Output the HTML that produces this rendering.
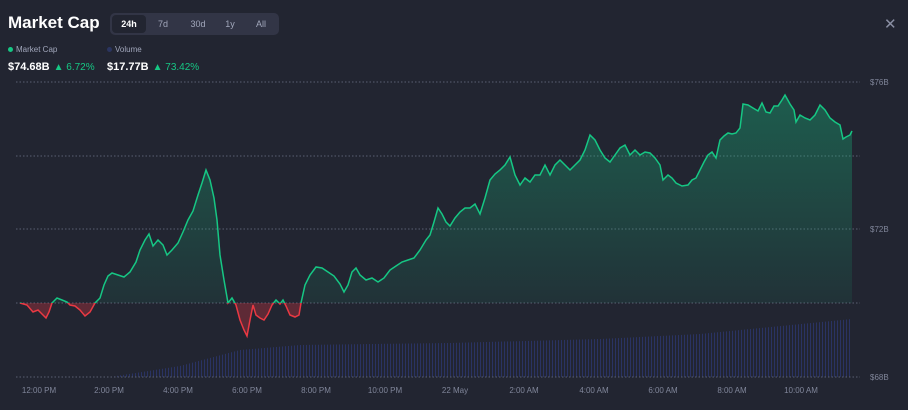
<!DOCTYPE html>
<html><head><meta charset="utf-8"><style>
body{margin:0;width:908px;height:410px;background:#222531;font-family:"Liberation Sans",sans-serif;overflow:hidden;position:relative;color:#fff}
.t{position:absolute;left:8px;top:13px;font-size:17px;font-weight:bold}
.tabs{position:absolute;left:110px;top:13px;width:169px;height:22px;background:#323546;border-radius:5px}
.tabs span{position:absolute;top:0;line-height:22px;font-size:9px;color:#a1a7bb;text-align:center}
.tabs .a{background:#222531;border-radius:4px;color:#fff;font-weight:bold;left:2px;top:2px;width:34px;line-height:18px}
.lg{position:absolute;top:45px;font-size:8px;color:#a1a7bb}
.dot{display:inline-block;width:5px;height:5px;border-radius:50%;margin-right:3px;vertical-align:0}
.v{position:absolute;top:61px;font-size:11px;font-weight:bold}
.v b{color:#16c784;font-weight:normal;font-size:10px;margin-left:4px}
.x{position:absolute;left:884px;top:15px;color:#8a8fa3;font-size:15px}
</style></head><body>
<div class="t">Market Cap</div>
<div class="tabs"><span class="a">24h</span><span style="left:43px;width:20px">7d</span><span style="left:76px;width:24px">30d</span><span style="left:113px;width:14px">1y</span><span style="left:143px;width:16px">All</span></div>
<div class="lg" style="left:8px"><span class="dot" style="background:#16c784"></span>Market Cap</div>
<div class="lg" style="left:107px"><span class="dot" style="background:#2b3560"></span>Volume</div>
<div class="v" style="left:8px">$74.68B<b>▲ 6.72%</b></div>
<div class="v" style="left:107px">$17.77B<b>▲ 73.42%</b></div>
<div class="x">✕</div>
<svg width="908" height="410" style="position:absolute;left:0;top:0">
<defs>
<linearGradient id="g" x1="0" y1="90" x2="0" y2="303" gradientUnits="userSpaceOnUse"><stop offset="0" stop-color="#16c784" stop-opacity=".35"/><stop offset="1" stop-color="#16c784" stop-opacity=".08"/></linearGradient>
<pattern id="st" width="3" height="10" patternUnits="userSpaceOnUse"><rect width="1" height="10" fill="#2a3363"/></pattern>
<clipPath id="up"><rect x="0" y="0" width="908" height="303"/></clipPath>
<clipPath id="dn"><rect x="0" y="303" width="908" height="100"/></clipPath>
<path id="ln" d="M20,303 L27,305 33,312 38,310 42,314 46,318 49,312 52,303 57,298 62,300 67,302 70,305 75,306 80,310 85,316 90,312 95,303 100,298 104,285 108,276 112,273 118,275 124,277 130,272 136,262 140,250 145,240 149,234 153,246 158,240 163,245 167,255 172,250 178,243 183,232 188,220 193,211 198,195 202,183 206,170 210,180 214,198 217,220 220,255 224,280 228,303 232,298 236,305 240,320 244,330 247,336 250,320 253,305 256,315 260,318 264,320 268,314 272,305 276,300 280,304 283,300 286,306 290,315 295,317 299,315 301,303 305,285 310,275 316,267 322,268 328,272 334,276 340,284 344,292 348,285 352,272 356,268 360,275 366,280 372,278 378,282 384,278 390,270 396,266 402,262 408,260 414,258 420,250 426,240 430,235 434,222 438,208 442,214 446,222 450,226 455,218 460,212 465,208 470,208 475,204 480,214 485,198 490,180 495,174 500,170 505,165 510,157 515,175 520,185 525,178 530,182 535,175 540,175 545,165 550,175 555,165 560,160 565,165 570,170 575,165 580,160 585,150 590,135 595,140 600,150 605,158 610,162 615,155 620,148 625,145 630,155 635,150 640,155 645,152 650,153 655,158 660,165 663,180 668,175 672,178 676,183 682,186 688,185 692,180 696,178 700,170 704,162 708,155 712,152 716,158 720,140 724,136 728,133 732,134 736,133 740,128 743,104 748,105 753,108 758,111 762,103 766,112 770,113 774,106 778,106 782,100 785,95 790,104 794,110 796,122 800,115 805,118 810,120 815,115 820,105 825,110 830,118 835,122 840,125 843,139 846,137 850,135 852,131"/>
<path id="ar" d="M20,303 L27,305 33,312 38,310 42,314 46,318 49,312 52,303 57,298 62,300 67,302 70,305 75,306 80,310 85,316 90,312 95,303 100,298 104,285 108,276 112,273 118,275 124,277 130,272 136,262 140,250 145,240 149,234 153,246 158,240 163,245 167,255 172,250 178,243 183,232 188,220 193,211 198,195 202,183 206,170 210,180 214,198 217,220 220,255 224,280 228,303 232,298 236,305 240,320 244,330 247,336 250,320 253,305 256,315 260,318 264,320 268,314 272,305 276,300 280,304 283,300 286,306 290,315 295,317 299,315 301,303 305,285 310,275 316,267 322,268 328,272 334,276 340,284 344,292 348,285 352,272 356,268 360,275 366,280 372,278 378,282 384,278 390,270 396,266 402,262 408,260 414,258 420,250 426,240 430,235 434,222 438,208 442,214 446,222 450,226 455,218 460,212 465,208 470,208 475,204 480,214 485,198 490,180 495,174 500,170 505,165 510,157 515,175 520,185 525,178 530,182 535,175 540,175 545,165 550,175 555,165 560,160 565,165 570,170 575,165 580,160 585,150 590,135 595,140 600,150 605,158 610,162 615,155 620,148 625,145 630,155 635,150 640,155 645,152 650,153 655,158 660,165 663,180 668,175 672,178 676,183 682,186 688,185 692,180 696,178 700,170 704,162 708,155 712,152 716,158 720,140 724,136 728,133 732,134 736,133 740,128 743,104 748,105 753,108 758,111 762,103 766,112 770,113 774,106 778,106 782,100 785,95 790,104 794,110 796,122 800,115 805,118 810,120 815,115 820,105 825,110 830,118 835,122 840,125 843,139 846,137 850,135 852,131 L852,303 Z"/>
</defs>
<polygon fill="url(#st)" points="110,377 180,366 240,350 300,345 450,343 600,339 700,334 852,319 852,377"/>
<g stroke="#5a5f72" stroke-dasharray="1.5 2" stroke-width="1">
<line x1="16" y1="82" x2="860" y2="82"/><line x1="16" y1="156" x2="860" y2="156"/><line x1="16" y1="229" x2="860" y2="229"/><line x1="16" y1="303" x2="860" y2="303"/><line x1="16" y1="377" x2="860" y2="377"/></g>
<g clip-path="url(#up)"><use href="#ar" fill="url(#g)"/><use href="#ln" fill="none" stroke="#16c784" stroke-width="1.5"/></g>
<g clip-path="url(#dn)"><use href="#ar" fill="#ea3943" fill-opacity=".3"/><use href="#ln" fill="none" stroke="#ea3943" stroke-width="1.5"/></g>
<g fill="#80869a" font-size="8" font-family="Liberation Sans,sans-serif">
<text x="870" y="85">$76B</text><text x="870" y="232">$72B</text><text x="870" y="380">$68B</text>
<g text-anchor="middle"><text x="39" y="393">12:00 PM</text><text x="109" y="393">2:00 PM</text><text x="178" y="393">4:00 PM</text><text x="247" y="393">6:00 PM</text><text x="316" y="393">8:00 PM</text><text x="385" y="393">10:00 PM</text><text x="455" y="393">22 May</text><text x="524" y="393">2:00 AM</text><text x="594" y="393">4:00 AM</text><text x="663" y="393">6:00 AM</text><text x="732" y="393">8:00 AM</text><text x="801" y="393">10:00 AM</text></g></g>
</svg>
</body></html>
